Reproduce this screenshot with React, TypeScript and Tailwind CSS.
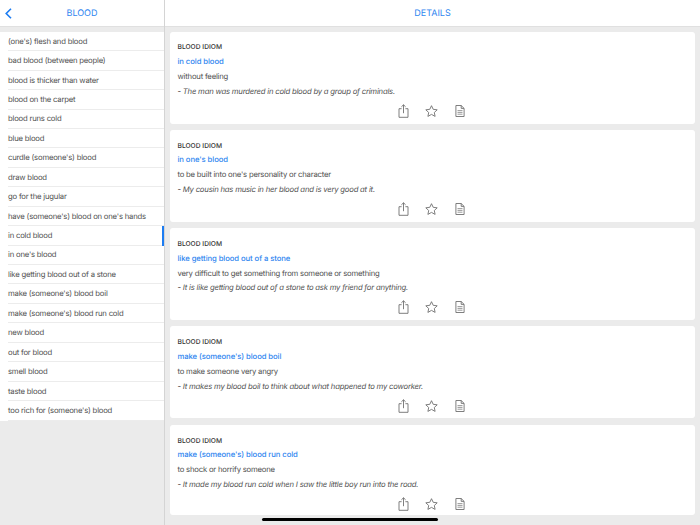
const TERMS = [
  "(one's) flesh and blood",
  "bad blood (between people)",
  "blood is thicker than water",
  "blood on the carpet",
  "blood runs cold",
  "blue blood",
  "curdle (someone's) blood",
  "draw blood",
  "go for the jugular",
  "have (someone's) blood on one's hands",
  "in cold blood",
  "in one's blood",
  "like getting blood out of a stone",
  "make (someone's) blood boil",
  "make (someone's) blood run cold",
  "new blood",
  "out for blood",
  "smell blood",
  "taste blood",
  "too rich for (someone's) blood",
];

const CARDS = [
  {
    title: "in cold blood",
    meaning: "without feeling",
    example: "- The man was murdered in cold blood by a group of criminals.",
  },
  {
    title: "in one's blood",
    meaning: "to be built into one's personality or character",
    example: "- My cousin has music in her blood and is very good at it.",
  },
  {
    title: "like getting blood out of a stone",
    meaning: "very difficult to get something from someone or something",
    example: "- It is like getting blood out of a stone to ask my friend for anything.",
  },
  {
    title: "make (someone's) blood boil",
    meaning: "to make someone very angry",
    example: "- It makes my blood boil to think about what happened to my coworker.",
  },
  {
    title: "make (someone's) blood run cold",
    meaning: "to shock or horrify someone",
    example: "- It made my blood run cold when I saw the little boy run into the road.",
  },
];

function ShareIcon() {
  return (
    <svg width="11" height="14" viewBox="0 0 11 14" fill="none" stroke="#707070" strokeWidth="0.9">
      <path d="M3.6 4.7H1v8.6h9V4.7H7.4" />
      <path d="M5.5 9.2V0.8M3.4 2.8l2.1-2 2.1 2" />
    </svg>
  );
}

function StarIcon() {
  return (
    <svg width="13" height="12" viewBox="0 0 13 12" fill="none" stroke="#707070" strokeWidth="0.9" strokeLinejoin="round">
      <path d="M6.5.7l1.7 3.6 4 .5-2.9 2.7.8 3.9-3.6-2-3.6 2 .8-3.9L.8 4.8l4-.5z" />
    </svg>
  );
}

function DocIcon() {
  return (
    <svg width="10" height="12" viewBox="0 0 10 12" fill="none" stroke="#707070" strokeWidth="0.9">
      <path d="M.9.5h5.3l2.9 2.9v8.1H.9z" />
      <path d="M6.2.5v2.9h2.9" />
      <path d="M2.5 5.6h5M2.5 7.4h5M2.5 9.2h5" strokeWidth="0.7" />
    </svg>
  );
}

export default function App() {
  return (
    <div className="relative flex h-[525px] w-[700px] overflow-hidden bg-[#ebebeb] font-['Inter',sans-serif] text-[#505050] [text-rendering:geometricPrecision]">
      {/* Left column */}
      <div className="flex w-[165px] shrink-0 flex-col border-r border-[#d4d4d4]">
        <div className="relative flex h-[27px] shrink-0 items-center justify-center border-b border-[#e0e0e0] bg-white pt-[1px]">
          <svg className="absolute left-[5px] top-[8px]" width="7" height="11" viewBox="0 0 7 11" fill="none" stroke="#1c7cf2" strokeWidth="1.6">
            <path d="M6 .7L1.2 5.5 6 10.3" />
          </svg>
          <span className="text-[9px] text-[#2f86f0]">BLOOD</span>
        </div>
        <ul className="mt-[4.8px] bg-white">
          {TERMS.map((term) => (
            <li key={term} className="relative h-[19.45px] pl-2">
              <div className="flex h-full items-center border-b border-[#ececec] pt-[1px] text-[7.7px] leading-none tracking-[-0.2px]">
                {term}
              </div>
              {term === "in cold blood" && (
                <div className="absolute right-0 top-0 h-full w-[2px] bg-[#1c7cf2]" />
              )}
            </li>
          ))}
        </ul>
      </div>

      {/* Right column */}
      <div className="flex min-w-0 flex-1 flex-col">
        <div className="flex h-[27px] shrink-0 items-center justify-center border-b border-[#e0e0e0] bg-white pt-[1px]">
          <span className="text-[9px] text-[#2f86f0]">DETAILS</span>
        </div>
        <div className="flex flex-col gap-[6.3px] pl-[4.5px] pr-[5px] pt-[4.5px]">
          {CARDS.map((card, i) => (
            <div
              key={card.title}
              className={`flex flex-col rounded-[3px] bg-white pl-2 pt-[11px] ${i === 4 ? "h-[90px]" : "h-[92px]"}`}
            >
              <div className="flex flex-col">
                <div className="flex h-[10px] items-center text-[6.7px] font-medium text-[#333333]">BLOOD IDIOM</div>
                <div className="mt-[4.3px] flex h-[10px] items-center text-[7.7px] font-medium tracking-[-0.08px] text-[#2f86f0]">{card.title}</div>
                <div className="mt-[5px] flex h-[10px] items-center text-[7.7px] tracking-[-0.2px]">{card.meaning}</div>
                <div className="mt-[4.7px] flex h-[10px] items-center text-[7.7px] italic tracking-[-0.2px]">{card.example}</div>
              </div>
              <div className="mt-[7.3px] flex items-center justify-center pr-[9.5px]">
                <div className="flex w-[28px] justify-center"><ShareIcon /></div>
                <div className="flex w-[28px] justify-center"><StarIcon /></div>
                <div className="flex w-[28px] justify-center"><DocIcon /></div>
              </div>
            </div>
          ))}
        </div>
      </div>

      {/* Home indicator */}
      <div className="absolute bottom-[4px] left-[262px] h-[3px] w-[176px] rounded-full bg-black" />
    </div>
  );
}
